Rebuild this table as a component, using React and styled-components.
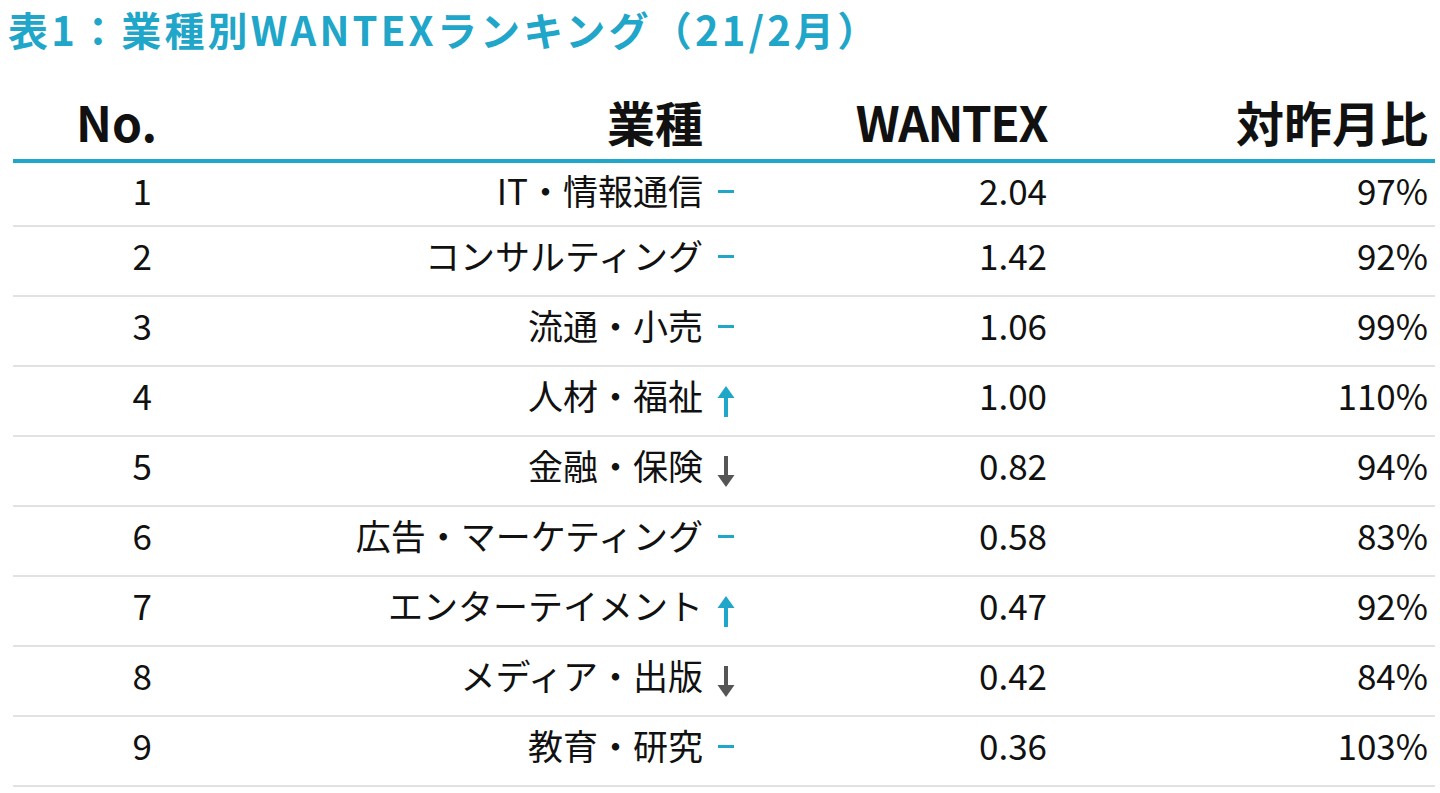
import React from "react";
import styled, { createGlobalStyle } from "styled-components";

const GlobalStyle = createGlobalStyle`
  body {
    margin: 0;
    background: #fff;
    font-family: "Noto Sans CJK JP", "Noto Sans", sans-serif;
    color: #111;
  }
`;

const Page = styled.div`
  width: 1440px;
  height: 793px;
  overflow: hidden;
  padding: 2px 5px 0 8px;
  box-sizing: border-box;
`;

const Title = styled.h1`
  margin: 0;
  font-size: 40px;
  font-weight: 700;
  line-height: 54px;
  color: #1fa6c9;
  letter-spacing: 3.2px;
  white-space: nowrap;
`;

const Table = styled.div`
  margin: 30px 0 0 5px;
`;

const Row = styled.div`
  display: grid;
  grid-template-columns: 144px 578px 312px 388px;
  align-items: center;
  height: 70px;
  box-sizing: border-box;
  border-bottom: 2px solid #e2e2e2;
  padding-bottom: 14px;
  font-size: 35px;
`;

const HeadRow = styled(Row)`
  height: 77px;
  border-bottom: 4px solid #1fa6c9;
  padding-bottom: 10px;
  font-size: 48px;
  font-weight: 700;
`;

const Body = styled.div`
  & > ${Row}:first-child {
    height: 64px;
    padding-bottom: 10px;
  }
`;

const Cell = styled.div`
  text-align: right;
  white-space: nowrap;
  padding-right: ${(p) => p.$pad || 0}px;
  letter-spacing: ${(p) => p.$ls || 0}px;
`;

const Name = styled(Cell)`
  display: flex;
  justify-content: flex-end;
  align-items: center;
  gap: 14px;
`;

const Mark = styled.span`
  width: 18px;
  height: 32px;
  display: inline-flex;
  align-items: center;
  justify-content: center;
`;

const Dash = styled.span`
  width: 16px;
  height: 3px;
  background: #1fa6c9;
  margin-top: 4px;
`;

const ArrowSvg = styled.svg`
  margin-top: 14px;
  flex: none;
`;

const Arrow = ({ dir }) => {
  const color = dir === "up" ? "#1fa6c9" : "#555";
  return (
    <ArrowSvg width="18" height="31" viewBox="0 0 18 31">
      {dir === "up" ? (
        <>
          <polygon points="9,0 17.5,12 0.5,12" fill={color} />
          <rect x="7" y="11" width="4" height="20" fill={color} />
        </>
      ) : (
        <>
          <rect x="7" y="0" width="4" height="20" fill={color} />
          <polygon points="9,31 17.5,19 0.5,19" fill={color} />
        </>
      )}
    </ArrowSvg>
  );
};

const rows = [
  ["1", "IT・情報通信", "flat", "2.04", "97%"],
  ["2", "コンサルティング", "flat", "1.42", "92%"],
  ["3", "流通・小売", "flat", "1.06", "99%"],
  ["4", "人材・福祉", "up", "1.00", "110%"],
  ["5", "金融・保険", "down", "0.82", "94%"],
  ["6", "広告・マーケティング", "flat", "0.58", "83%"],
  ["7", "エンターテイメント", "up", "0.47", "92%"],
  ["8", "メディア・出版", "down", "0.42", "84%"],
  ["9", "教育・研究", "flat", "0.36", "103%"],
];

export default function App() {
  return (
    <Page>
      <GlobalStyle />
      <Title>表1：業種別WANTEXランキング（21/2月）</Title>
      <Table>
        <HeadRow>
          <Cell>No.</Cell>
          <Cell $pad={32}>業種</Cell>
          <Cell $ls={-1.5}>WANTEX</Cell>
          <Cell $pad={7}>対昨月比</Cell>
        </HeadRow>
        <Body>
          {rows.map(([no, name, trend, val, ratio]) => (
            <Row key={no}>
              <Cell $pad={5}>{no}</Cell>
              <Name>
                {name}
                <Mark>{trend === "flat" ? <Dash /> : <Arrow dir={trend} />}</Mark>
              </Name>
              <Cell>{val}</Cell>
              <Cell $pad={7}>{ratio}</Cell>
            </Row>
          ))}
        </Body>
      </Table>
    </Page>
  );
}
